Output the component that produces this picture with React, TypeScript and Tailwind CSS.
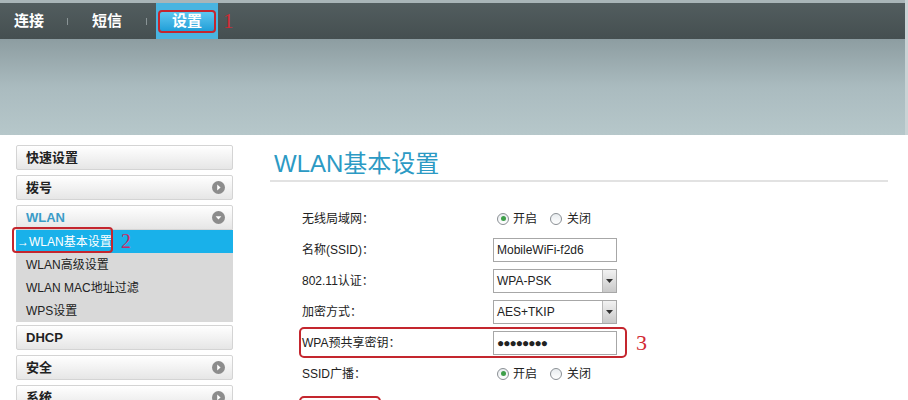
import React from "react";

const cjk = { fontFamily: '"Liberation Sans", "Noto Sans CJK SC", sans-serif' };
const serif = { fontFamily: '"Liberation Serif", serif' };

function CircleIcon({ down }: { down?: boolean }) {
  return (
    <svg width="13" height="13" viewBox="0 0 13 13" className="shrink-0">
      <circle cx="6.5" cy="6.5" r="6.5" fill="#8c8c8c" />
      {down ? (
        <path d="M3.6 5.2 L9.4 5.2 L6.5 8.6 Z" fill="#ffffff" />
      ) : (
        <path d="M5.2 3.6 L8.6 6.5 L5.2 9.4 Z" fill="#ffffff" />
      )}
    </svg>
  );
}

function Radio({ checked }: { checked?: boolean }) {
  return (
    <span className="flex size-[12px] items-center justify-center rounded-full border border-[#8a8f94] bg-gradient-to-b from-[#e8ecef] to-white">
      {checked && <span className="size-[5px] rounded-full bg-[#3f9f4a]" />}
    </span>
  );
}

function SideItem({ label, icon }: { label: string; icon?: boolean }) {
  return (
    <div className="flex h-[25px] items-center justify-between rounded-[2px] border border-[#d4d4d4] bg-gradient-to-b from-white to-[#e6e6e6] pl-[9px] pr-[7px]">
      <span className="text-[13px] font-bold text-[#222]">{label}</span>
      {icon && <CircleIcon />}
    </div>
  );
}

function SelectBox({ value }: { value: string }) {
  return (
    <div className="flex h-[24px] w-[124px] items-stretch border border-[#a7a7a7] bg-white">
      <span className="flex flex-1 items-center pl-[3px] text-[12px] text-[#222]">{value}</span>
      <span className="flex w-[14px] items-center justify-center border-l border-[#b8b8b8] bg-gradient-to-b from-[#f2f2f2] to-[#c9c9c9]">
        <svg width="7" height="4" viewBox="0 0 7 4">
          <path d="M0 0 L7 0 L3.5 4 Z" fill="#333" />
        </svg>
      </span>
    </div>
  );
}

function Row({ label, children }: { label: string; children: React.ReactNode }) {
  return (
    <div className="flex h-[31px] items-center">
      <span className="w-[191px] text-[12px] text-[#222]">{label}</span>
      {children}
    </div>
  );
}

function OnOff() {
  return (
    <div className="flex items-center pl-[4px] text-[12px] text-[#222]">
      <Radio checked />
      <span className="ml-[4px]">开启</span>
      <span className="ml-[13px]">
        <Radio />
      </span>
      <span className="ml-[5px]">关闭</span>
    </div>
  );
}

export default function App() {
  return (
    <div className="h-[400px] w-[908px] overflow-hidden bg-white" style={cjk}>
      {/* top nav + banner */}
      <div className="bg-[#c9d3d5] pr-[3px]">
        <div className="flex h-[39px] items-stretch border-t-[3px] border-[#a9b5b8] bg-gradient-to-b from-[#525d5f] to-[#454f50]">
          <div className="flex items-center pl-[14px] text-[15px] font-bold text-white">
            <span>连接</span>
            <span className="ml-[23px] mr-[24px] h-[7px] w-px bg-[#8a9496]" />
            <span>短信</span>
            <span className="ml-[24px] mr-[9px] h-[7px] w-px bg-[#8a9496]" />
          </div>
          <div className="flex w-[62px] items-center justify-center bg-[#49b4e0]">
            <span className="flex h-[23px] w-[58px] items-center justify-center rounded-[4px] border-2 border-[#c4262e] bg-gradient-to-b from-[#5cc7f0] to-[#1d9fd8] text-[15px] font-bold text-white">
              设置
            </span>
          </div>
          <span className="ml-[5px] flex items-center text-[21px] leading-none text-[#d22a34]" style={serif}>
            1
          </span>
        </div>
        <div className="h-[96px] bg-gradient-to-b from-[#8d9da1] via-[#aabbbf] to-[#b6c7ca]" />
      </div>
      {/* body */}
      <div className="flex pl-[16px] pt-[10px]">
        {/* sidebar */}
        <div className="flex w-[217px] flex-col gap-[5px]">
          <SideItem label="快速设置" />
          <SideItem label="拨号" icon />
          <div className="flex flex-col">
            <div className="flex h-[25px] items-center justify-between rounded-t-[2px] border border-[#d4d4d4] bg-gradient-to-b from-white to-[#e6e6e6] pl-[9px] pr-[7px]">
              <span className="text-[13px] font-bold text-[#3a9cc8]">WLAN</span>
              <CircleIcon down />
            </div>
            <div className="flex flex-col bg-[#d9d9d9]">
              <div className="relative flex h-[23px] items-center bg-[#19b1ea] pl-[1px] text-[12px] text-white">
                →WLAN基本设置
                <span className="absolute -top-[3px] left-[-4px] h-[26px] w-[101px] rounded-[4px] border-2 border-[#c4262e]" />
                <span className="absolute left-[105px] top-[1px] text-[20px] leading-none text-[#c82a68]" style={serif}>
                  2
                </span>
              </div>
              <div className="flex h-[23px] items-center pl-[10px] text-[12px] text-[#222]">WLAN高级设置</div>
              <div className="flex h-[23px] items-center pl-[10px] text-[12px] text-[#222]">WLAN MAC地址过滤</div>
              <div className="flex h-[23px] items-center pl-[10px] text-[12px] text-[#222]">WPS设置</div>
            </div>
          </div>
          <div className="-mt-[2px]">
            <SideItem label="DHCP" />
          </div>
          <SideItem label="安全" icon />
          <SideItem label="系统" icon />
        </div>
        {/* main */}
        <div className="ml-[37px] w-[618px]">
          <div className="border-b-2 border-[#e2e2e2] pb-[2px] pl-[4px] pt-[5px] text-[24px] leading-[28px] text-[#2c9ac4]">
            WLAN基本设置
          </div>
          <div className="pl-[32px] pt-[21px]">
            <Row label="无线局域网：">
              <OnOff />
            </Row>
            <Row label="名称(SSID)：">
              <div className="flex h-[24px] w-[124px] items-center border border-[#a7a7a7] bg-white pl-[3px] text-[12px] text-[#222]">
                MobileWiFi-f2d6
              </div>
            </Row>
            <Row label="802.11认证：">
              <SelectBox value="WPA-PSK" />
            </Row>
            <Row label="加密方式：">
              <SelectBox value="AES+TKIP" />
            </Row>
            <div className="relative">
              <Row label="WPA预共享密钥：">
                <div className="flex h-[24px] w-[124px] items-center border border-[#a7a7a7] bg-white pl-[3px] text-[12px] font-bold tracking-[-1px] text-[#222]">
                  ●●●●●●●●
                </div>
              </Row>
              <span className="absolute left-[-3px] top-[0px] h-[31px] w-[328px] rounded-[5px] border-2 border-[#c4262e]" />
              <span className="absolute left-[334px] top-[5px] text-[22px] leading-none text-[#d22a34]" style={serif}>
                3
              </span>
            </div>
            <Row label="SSID广播：">
              <OnOff />
            </Row>
            <div className="ml-[-3px] mt-[7px] h-[20px] w-[82px] rounded-[5px] border-2 border-[#c4262e]" />
          </div>
        </div>
      </div>
    </div>
  );
}
